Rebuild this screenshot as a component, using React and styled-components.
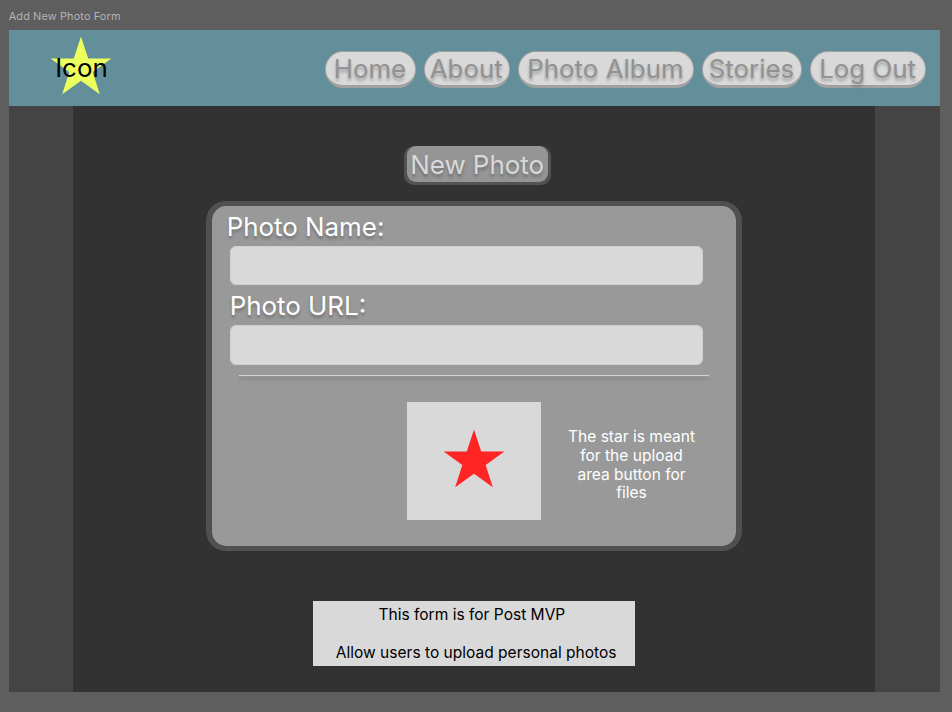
import React from 'react';
import styled, { createGlobalStyle } from 'styled-components';

const GlobalStyle = createGlobalStyle`
  * { box-sizing: border-box; }
  body {
    margin: 0;
    background: #5e5e5e;
    font-family: Inter, 'Liberation Sans', sans-serif;
    font-weight: 400;
  }
`;

const Canvas = styled.div`
  width: 952px;
  height: 712px;
  padding: 0 12px 20.4px 8.7px;
  display: flex;
  flex-direction: column;
  overflow: hidden;
`;

const FrameName = styled.div`
  height: 29.5px;
  padding-top: 10px;
  font-size: 10.9px;
  line-height: 13px;
  letter-spacing: 0.13px;
  color: #b4b4b4;
`;

const Frame = styled.main`
  flex: 1;
  display: flex;
  flex-direction: column;
  background: #444444;
`;

const Header = styled.header`
  height: 76.3px;
  flex: none;
  display: flex;
  justify-content: space-between;
  background: #628f9a;
  padding: 6.5px 13.8px 0 41.6px;
`;

const Logo = styled.div`
  display: grid;
  width: 62px;
  height: 60px;

  > * { grid-area: 1 / 1; }
`;

const LogoText = styled.span`
  padding: 16px 0 0 4.9px;
  font-size: 25.9px;
  line-height: 31px;
  color: #000;
`;

const Nav = styled.nav`
  display: flex;
  gap: 8.4px;
  padding-top: 15px;
`;

const NavButton = styled.a`
  width: ${(p) => p.$width}px;
  height: 37px;
  display: flex;
  justify-content: center;
  padding-right: 1.2px;
  border: solid #a1a1a1;
  border-width: 0.7px 1px 3px;
  border-radius: 18px;
  background: #d9d9d9;
  color: #929292;
  font-size: 25.9px;
  line-height: 34px;
  white-space: nowrap;
  text-shadow: 0 3px 3px rgba(0, 0, 0, 0.25);
`;

const Content = styled.section`
  flex: 1;
  width: 801.7px;
  margin-left: 64.6px;
  padding-top: 40px;
  display: flex;
  flex-direction: column;
  align-items: center;
  background: #323232;
`;

const Title = styled.h1`
  margin: 0 0 0 6px;
  width: 147px;
  height: 39.5px;
  background: #535353;
  border-radius: 10px;
  padding: 0 3px 3.3px;
`;

const TitleFace = styled.span`
  display: flex;
  justify-content: center;
  height: 36.2px;
  border-radius: 9px;
  background: #959595;
  color: #d9d9d9;
  font-size: 25.9px;
  font-weight: 400;
  line-height: 38px;
  white-space: nowrap;
  text-shadow: 0 3px 3px rgba(0, 0, 0, 0.25);
`;

const Card = styled.form`
  width: 536.5px;
  height: 350px;
  margin-top: 15.3px;
  border: solid #505050;
  border-width: 5px 6px 5.5px;
  border-radius: 20px;
  background: #999999;
  padding-left: 18px;
`;

const Label = styled.label`
  display: block;
  height: 40px;
  padding-left: ${(p) => p.$indent || 0}px;
  margin-left: -3.2px;
  font-size: 25.9px;
  line-height: 42.4px;
  color: #fff;
  text-shadow: 0 3px 3px rgba(0, 0, 0, 0.25);
`;

const Input = styled.input`
  display: block;
  width: 473.5px;
  height: 39.5px;
  border: 1px solid #d0d0d0;
  border-radius: 6px;
  background: #d9d9d9;
`;

const Divider = styled.hr`
  width: 470.5px;
  height: 1px;
  margin: 10.5px 0 0 8.7px;
  border: 0;
  background: #d4d4d4;
  box-shadow: 0 3px 3px rgba(0, 0, 0, 0.25);
`;

const UploadRow = styled.div`
  display: flex;
  margin: 26px 0 0 177.5px;
`;

const UploadArea = styled.div`
  width: 133.5px;
  height: 118px;
  display: flex;
  justify-content: center;
  padding-top: 26.6px;
  background: #d9d9d9;
`;

const Hint = styled.p`
  width: 136px;
  margin: 26px 0 0 22.7px;
  text-align: center;
  font-size: 15.54px;
  line-height: 18.8px;
  color: #fff;
`;

const Note = styled.aside`
  width: 321.5px;
  height: 65px;
  margin-top: 50.3px;
  padding-top: 5.2px;
  background: #d9d9d9;
  color: #000;
  font-size: 15.54px;
  line-height: 18.8px;
  text-align: center;
`;

const NoteLine = styled.p`
  margin: 0 0 18.8px ${(p) => p.$shift}px;
`;

const StarShape = styled.svg`
  display: block;
  width: 62px;
  height: 60px;
`;

function Star({ color }) {
  return (
    <StarShape viewBox="0 0 62 60" aria-hidden="true">
      <path
        fill={color}
        d="M31 .5 38.2 22.4H61.4L42.7 36 49.8 58.2 31 44.7 12.2 58.2 19.3 36 .6 22.4H23.8Z"
      />
    </StarShape>
  );
}

const links = [
  { label: 'Home', width: 90.3 },
  { label: 'About', width: 85.6 },
  { label: 'Photo Album', width: 176 },
  { label: 'Stories', width: 99.4 },
  { label: 'Log Out', width: 116 },
];

export default function App() {
  return (
    <>
      <GlobalStyle />
      <Canvas>
        <FrameName>Add New Photo Form</FrameName>
        <Frame>
          <Header>
            <Logo>
              <Star color="#ecff5d" />
              <LogoText>Icon</LogoText>
            </Logo>
            <Nav>
              {links.map((l) => (
                <NavButton key={l.label} $width={l.width}>
                  {l.label}
                </NavButton>
              ))}
            </Nav>
          </Header>
          <Content>
            <Title>
              <TitleFace>New Photo</TitleFace>
            </Title>
            <Card>
              <Label htmlFor="name">Photo Name:</Label>
              <Input id="name" />
              <Label htmlFor="url" $indent={3}>Photo URL:</Label>
              <Input id="url" />
              <Divider />
              <UploadRow>
                <UploadArea>
                  <Star color="#ff2525" />
                </UploadArea>
                <Hint>The star is meant for the upload area button for files</Hint>
              </UploadRow>
            </Card>
            <Note>
              <NoteLine $shift={-4.5}>This form is for Post MVP</NoteLine>
              <NoteLine $shift={4}>Allow users to upload personal photos</NoteLine>
            </Note>
          </Content>
        </Frame>
      </Canvas>
    </>
  );
}
